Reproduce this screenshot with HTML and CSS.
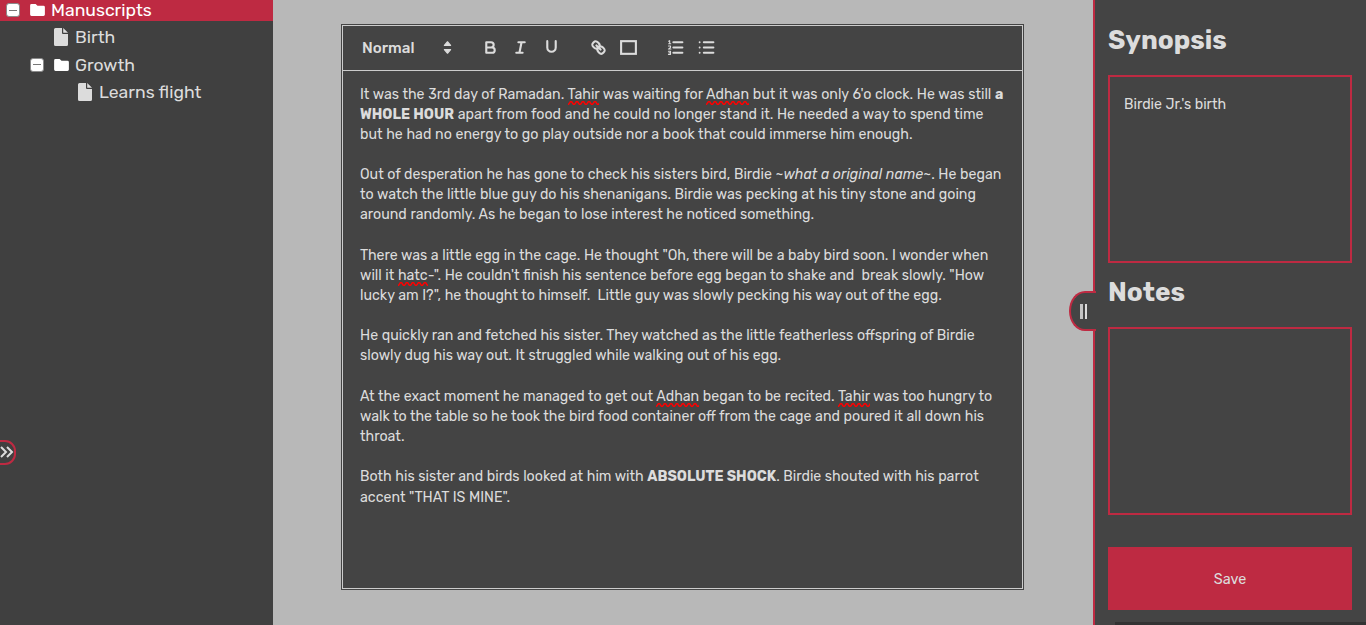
FILE: index.html
```html
<!DOCTYPE html>
<html lang="en">
<head>
<meta charset="utf-8">
<title>Manuscripts</title>
<link rel="stylesheet" href="styles.css">
</head>
<body>
<div class="app">
  <nav class="tree">
    <div class="row active"><span class="box"></span><svg class="folder" viewBox="0 0 16 13"><path d="M1.500 0H6l2 2h6.500q1.500 0 1.500 1.500v8q0 1.500-1.500 1.500h-13Q0 13 0 11.500v-10Q0 0 1.500 0z"/></svg><span>Manuscripts</span></div>
    <div class="row child"><svg class="file" viewBox="0 0 14 18"><path d="M1.500 0H8v5q0 1 1 1h5v10.500q0 1.500-1.500 1.500h-11Q0 18 0 16.500v-15Q0 0 1.500 0zM9.200 0L14 4.800H9.200z"/></svg><span>Birth</span></div>
    <div class="row nested"><span class="box"></span><svg class="folder" viewBox="0 0 16 13"><path d="M1.500 0H6l2 2h6.500q1.500 0 1.500 1.500v8q0 1.500-1.500 1.500h-13Q0 13 0 11.500v-10Q0 0 1.500 0z"/></svg><span>Growth</span></div>
    <div class="row grandchild"><svg class="file" viewBox="0 0 14 18"><path d="M1.500 0H8v5q0 1 1 1h5v10.500q0 1.500-1.500 1.500h-11Q0 18 0 16.500v-15Q0 0 1.500 0zM9.200 0L14 4.800H9.200z"/></svg><span>Learns flight</span></div>
    <button class="expand" aria-label="Expand"><svg viewBox="0 0 14 12"><path d="M1 1l5 5-5 5M7 1l5 5-5 5"/></svg></button>
  </nav>
  <main class="desk">
    <section class="editor">
      <div class="toolbar">
        <span class="format">Normal</span>
        <svg class="ic sort" viewBox="0 0 18 18"><polygon class="solid" points="6 7 9 3.500 12 7"/><polygon class="solid" points="6 11 9 14.500 12 11"/></svg>
        <svg class="ic bold" viewBox="0 0 18 18"><path d="M5 4h4.500a2.500 2.500 0 0 1 0 5H5zM5 9h5.500a2.500 2.500 0 0 1 0 5H5z"/></svg>
        <svg class="ic italic" viewBox="0 0 18 18"><path d="M7 4h6M5 14h6M10 4L8 14"/></svg>
        <svg class="ic under" viewBox="0 0 18 18"><path d="M5 3v6a4 4 0 0 0 8 0V3"/></svg>
        <svg class="ic link" viewBox="0 0 18 18"><path d="M7 7l4 4M8.900 4.577a3.476 3.476 0 0 1 .36 4.679 3.476 3.476 0 0 1-4.679-.36C3.185 7.500 2.035 6.400 4.217 4.217S7.500 3.185 8.900 4.577zM13.423 9.100a3.476 3.476 0 0 0-4.679-.36 3.476 3.476 0 0 0 .36 4.679c1.392 1.392 2.500 2.542 4.679.36s1.032-3.287-.36-4.679z"/></svg>
        <svg class="ic frame" viewBox="0 0 18 18"><rect x="2" y="3" width="14" height="12"/></svg>
        <svg class="ic ordered" viewBox="0 0 18 18"><path d="M7 4h8.500M7 9h8.500M7 14h8.500"/><path class="thin" d="M2.500 5.500h2M3.500 5.500v-3l-1 .5M2.300 7.500h2v1.300l-2 1.700h2.400M2.300 12.500h2v3h-2M2.800 14h1.500"/></svg>
        <svg class="ic bullet" viewBox="0 0 18 18"><path d="M6.500 4h9M6.500 9h9M6.500 14h9"/><path class="dots" d="M2.500 4h0M2.500 9h0M2.500 14h0"/></svg>
      </div>
      <div class="prose">
        <p>It was the 3rd day of Ramadan. <u>Tahir</u> was waiting for <u>Adhan</u> but it was only 6'o clock. He was still <b>a</b><br><b>WHOLE HOUR</b> apart from food and he could no longer stand it. He needed a way to spend time<br>but he had no energy to go play outside nor a book that could immerse him enough.</p>
        <p>Out of desperation he has gone to check his sisters bird, Birdie ~<i>what a original name</i>~. He began<br>to watch the little blue guy do his shenanigans. Birdie was pecking at his tiny stone and going<br>around randomly. As he began to lose interest he noticed something.</p>
        <p>There was a little egg in the cage. He thought "Oh, there will be a baby bird soon. I wonder when<br>will it <u>hatc</u>-". He couldn't finish his sentence before egg began to shake and&nbsp; break slowly. "How<br>lucky am I?", he thought to himself.&nbsp; Little guy was slowly pecking his way out of the egg.</p>
        <p>He quickly ran and fetched his sister. They watched as the little featherless offspring of Birdie<br>slowly dug his way out. It struggled while walking out of his egg.</p>
        <p>At the exact moment he managed to get out <u>Adhan</u> began to be recited. <u>Tahir</u> was too hungry to<br>walk to the table so he took the bird food container off from the cage and poured it all down his<br>throat.</p>
        <p>Both his sister and birds looked at him with <b>ABSOLUTE SHOCK</b>. Birdie shouted with his parrot<br>accent "THAT IS MINE".</p>
      </div>
    </section>
  </main>
  <aside class="panel">
    <div class="handle"><i></i><i></i></div>
    <h2 class="syn">Synopsis</h2>
    <div class="field"><span>Birdie Jr.'s birth</span></div>
    <h2 class="notes">Notes</h2>
    <div class="field"></div>
    <button class="save">Save</button>
    <div class="next"></div>
  </aside>
</div>
</body>
</html>
```
FILE: styles.css
```css
* { box-sizing: border-box; }
body { margin: 0; overflow: hidden; font-family: Rubik, Roboto, sans-serif; color: #dcdcdc; background: #b8b8b8; }
.app { display: flex; height: 625px; }

.tree { position: relative; flex: 0 0 273px; background: #404040; font-size: 17.6px; }
.row { display: flex; align-items: center; height: 27.4px; white-space: nowrap; }
.row span:last-child { line-height: 20px; }
.active { height: 21px; padding: 0 0 1px 6px; background: #be2a42; color: #fff; margin-bottom: 2.800px; }
.child { padding-left: 54px; }
.nested { padding-left: 30px; }
.grandchild { padding-left: 78px; }
.box { width: 14px; height: 14px; flex: none; border: 1px solid #8a8a8a; border-radius: 3px; background: linear-gradient(#777, #777) center / 8px 1px no-repeat, #fff; }
.folder { width: 15px; height: 12px; margin: 0 6px 0 10px; fill: #fff; }
.active .folder { margin-bottom: 1px; }
.file { width: 14px; height: 18px; margin-right: 7px; fill: #dcdcdc; }
.expand { position: absolute; left: -12px; top: 440px; width: 28px; height: 25px; padding: 0 0 2px 10px; border: 2px solid #be2a42; border-radius: 11px; background: #404040; display: flex; align-items: center; }
.expand svg { flex: none; width: 14px; height: 12px; fill: none; stroke: #dcdcdc; stroke-width: 2; }

.desk { flex: 0 0 820px; padding: 24px 0 0 68px; background: #b8b8b8; }
.editor { width: 683px; height: 566px; border: 1px solid #444; background: #444; box-shadow: inset 0 0 0 1px #ccc; padding: 1px; }
.toolbar { display: flex; align-items: center; height: 45px; border-bottom: 1px solid #ccc; padding: 0 0 1px 19px; }
.format { width: 76px; font-size: 15.2px; font-weight: 500; }
.ic { flex: none; width: 19px; height: 19px; fill: none; stroke: #dcdcdc; stroke-width: 2; stroke-linecap: round; stroke-linejoin: round; }
.solid { fill: #dcdcdc; stroke-width: 1; }
.thin { stroke-width: 1; }
.dots { stroke-width: 1.8; }
.bold { margin-left: 24px; }
.italic { margin-left: 11px; }
.under { margin-left: 12px; }
.link { margin-left: 28px; }
.frame { margin-left: 11px; stroke-linejoin: miter; }
.ordered { margin-left: 28px; }
.bullet { margin-left: 12px; }
.prose { padding: 13.500px 0 0 17px; font-size: 14.2px; line-height: 20.150px; word-spacing: .12px; white-space: nowrap; }
.prose p { margin: 0 0 20.150px; }
.prose p:first-child { word-spacing: .2px; }
.prose b { font-weight: 700; }
.prose u { text-decoration: none; padding-bottom: 2px; background: url("data:image/svg+xml,%3Csvg xmlns='http://www.w3.org/2000/svg' width='6' height='4'%3E%3Cpath d='M-1.5 1Q0 5 1.500 2T4.500 2T7.500 2' fill='none' stroke='red' stroke-width='1.6'/%3E%3C/svg%3E") left bottom / 6px 4px repeat-x; }

.panel { position: relative; flex: 0 0 273px; height: 625px; border-left: 2px solid #be2a42; padding: 0 14px 0 13px; background: #444; }
.panel h2 { margin: 0; font-size: 26.2px; line-height: 32px; }
.panel .syn { padding: 25px 0 18px; }
.panel .notes { padding: 14px 0 18px; }
.field { height: 188px; border: 2px solid #be2a42; padding: 18px 14px; font-size: 14.2px; line-height: 20px; }
.save { display: block; width: 244px; height: 63px; margin: 32px 0 12px; padding: 2px 0 0; border: 0; background: #be2a42; color: #dcdcdc; font: 14.4px Rubik, Roboto, sans-serif; }
.next { height: 3px; margin: 0 -14px 0 7px; background: #333; }
.handle { position: absolute; left: -26px; top: 291px; width: 27px; height: 40px; border: 2px solid #be2a42; border-right: 0; border-radius: 16px 0 0 16px / 20px 0 0 20px; background: #444; display: flex; align-items: center; gap: 2px; padding: 1px 0 0 9px; }
.handle i { width: 2px; height: 15px; background: #dcdcdc; }
.handle i:first-child { width: 3px; background: #c4c4c4; }
```
